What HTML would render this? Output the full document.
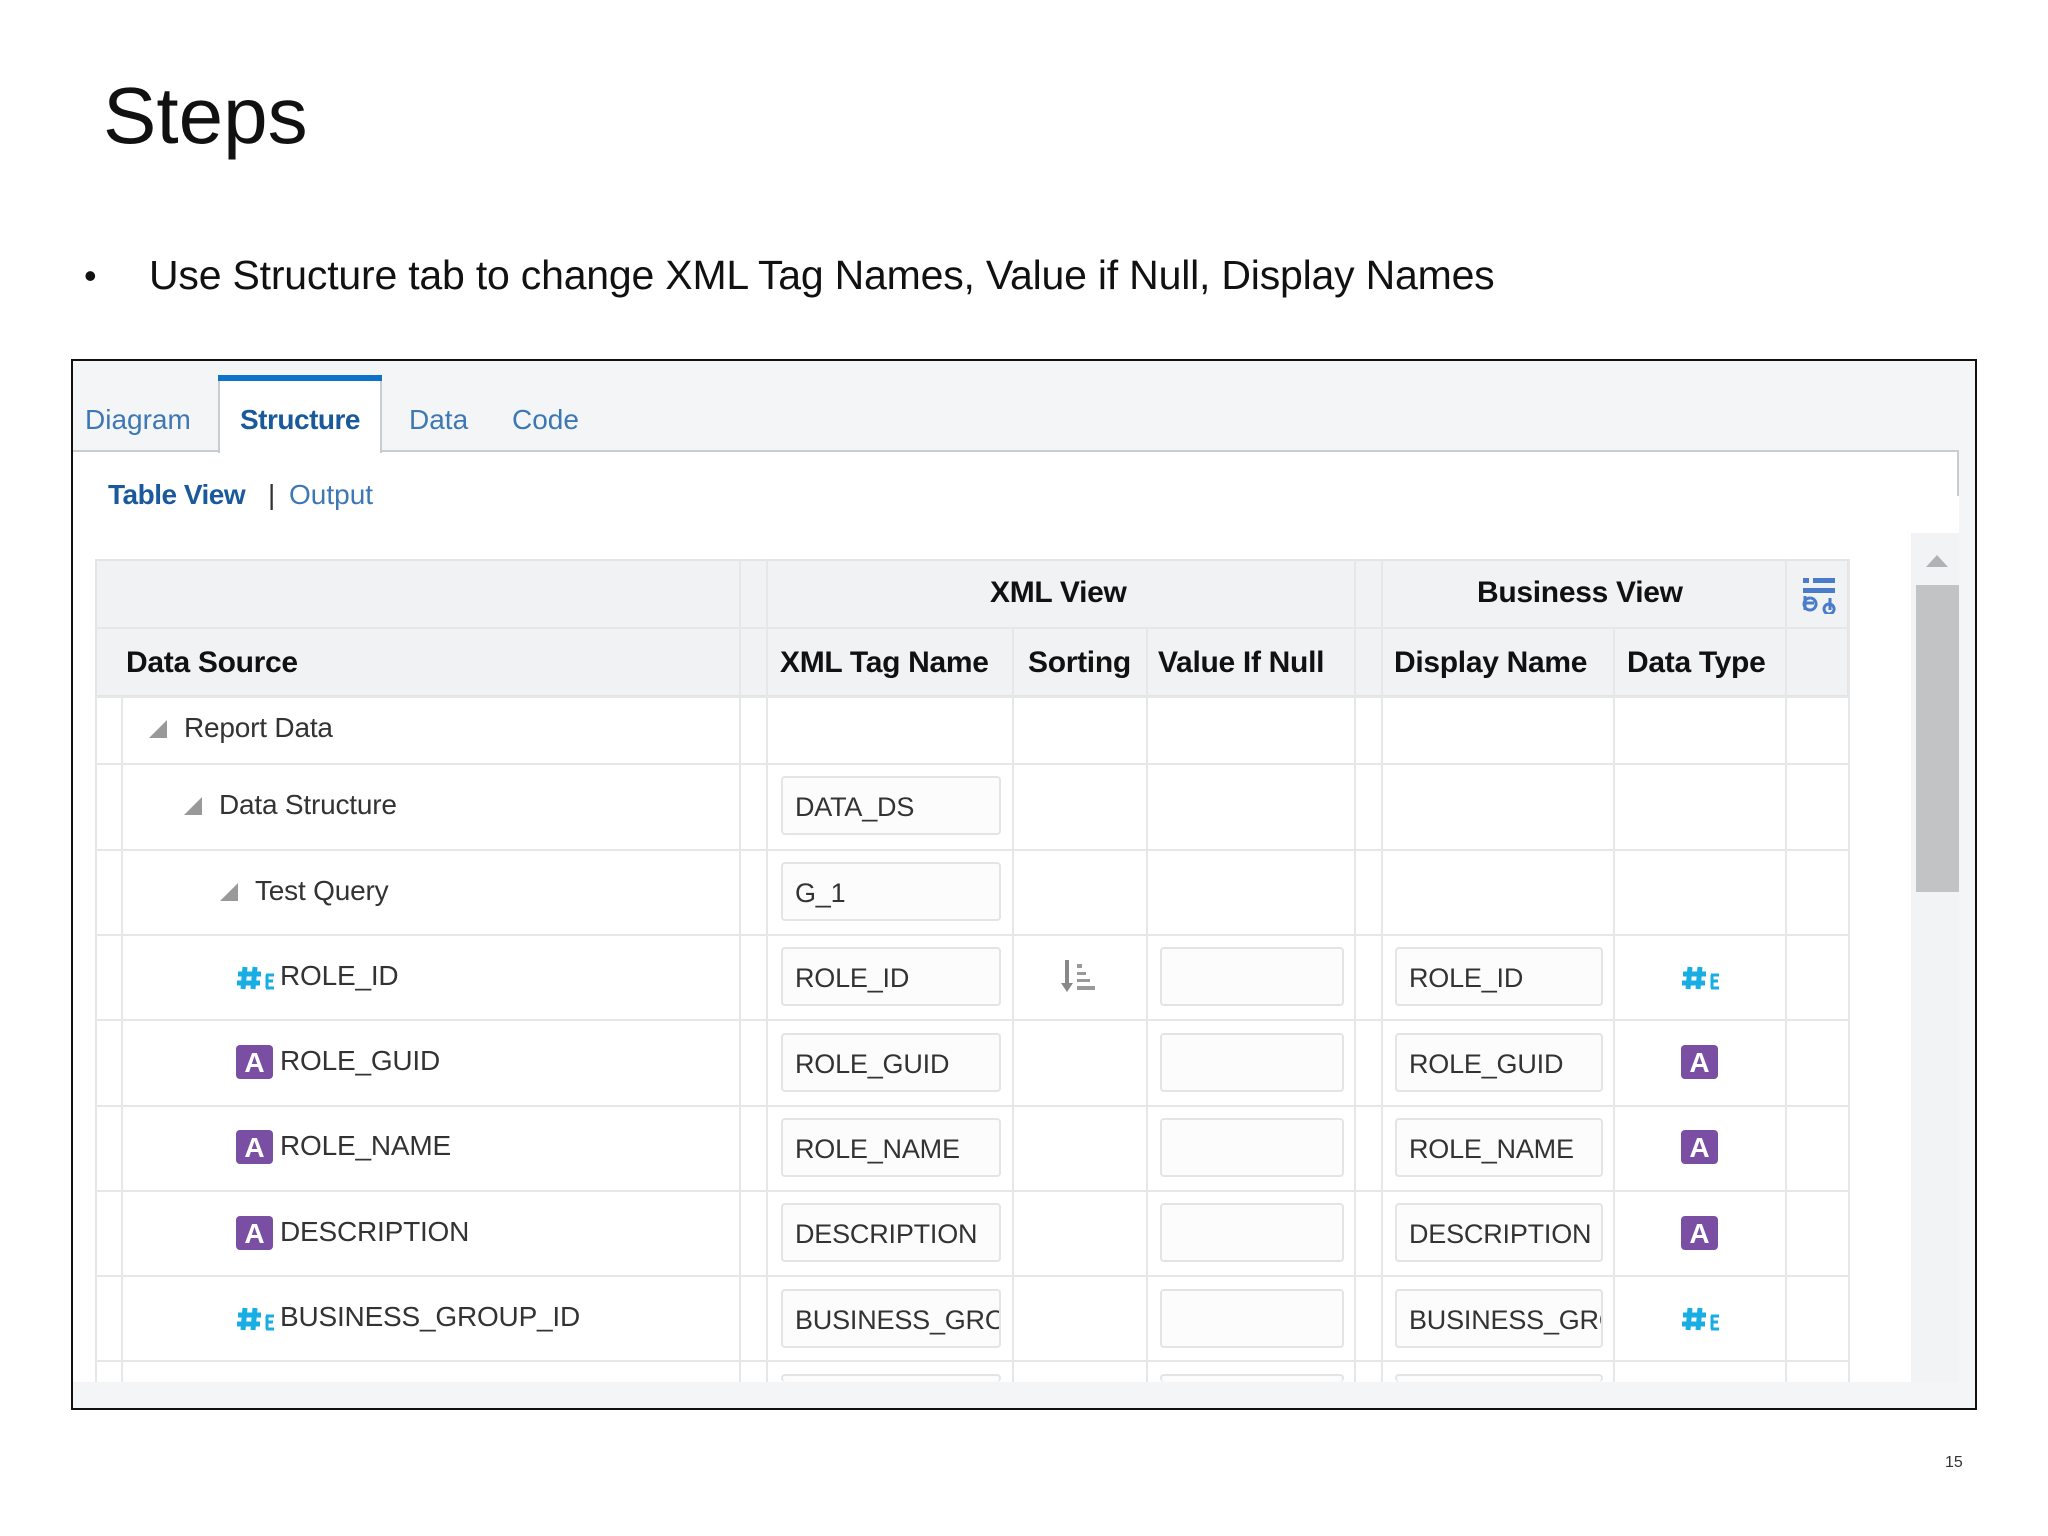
<!DOCTYPE html>
<html><head><meta charset="utf-8"><style>
*{margin:0;padding:0;box-sizing:border-box}
body{width:2048px;height:1536px;background:#fff;position:relative;overflow:hidden;font-family:"Liberation Sans",Arial,sans-serif}
.a{position:absolute}
.t{position:absolute;white-space:nowrap;line-height:1}
.hl{position:absolute;height:2px;background:#e6e7e9}
.vl{position:absolute;width:2px;background:#e6e7e9}
.inp{position:absolute;height:59px;border:2px solid #e2e4e6;border-radius:4px;background:#fcfcfd;overflow:hidden;font-size:27px;color:#333;padding:14px 0 0 12px;white-space:nowrap;letter-spacing:-0.2px}
.hd{font-weight:bold;font-size:30px;color:#111;letter-spacing:-0.3px}
.tx{font-size:28px;color:#333;letter-spacing:-0.2px}
.num{position:absolute}
.ab{position:absolute;width:37px;height:34px;background:#7a4ea3;border-radius:4px;color:#fff;font-weight:bold;font-size:28px;text-align:center;line-height:35px}
.tri{position:absolute;width:0;height:0;border-left:18px solid transparent;border-bottom:18px solid #999}
</style></head><body>
<div class="t" style="left:103px;top:76px;font-size:80px;color:#111">Steps</div>
<div class="t" style="left:84px;top:258px;font-size:36px;color:#111">•</div>
<div class="t" style="left:149px;top:255px;font-size:41px;color:#111;letter-spacing:-0.2px">Use Structure tab to change XML Tag Names, Value if Null, Display Names</div>

<div class="a" style="left:71px;top:359px;width:1906px;height:1051px;border:2px solid #111;background:#f4f5f6"></div>
<div class="a" style="left:73px;top:451px;width:1886px;height:931px;background:#fff"></div>
<div class="a" style="left:73px;top:450px;width:1886px;height:2px;background:#c9cdd2"></div>
<div class="a" style="left:1957px;top:450px;width:2px;height:46px;background:#c9cdd2"></div>
<div class="a" style="left:218px;top:375px;width:164px;height:78px;background:#fff;border-left:2px solid #c9cdd2;border-right:2px solid #c9cdd2"></div>
<div class="a" style="left:218px;top:375px;width:164px;height:6px;background:#0f72c9"></div>
<div class="t" style="left:85px;top:406px;font-size:28px;color:#3d78b5">Diagram</div>
<div class="t" style="left:240px;top:406px;font-size:28px;color:#1a5a9c;font-weight:bold;letter-spacing:-0.5px">Structure</div>
<div class="t" style="left:409px;top:406px;font-size:28px;color:#3d78b5">Data</div>
<div class="t" style="left:512px;top:406px;font-size:28px;color:#3d78b5">Code</div>
<div class="t" style="left:108px;top:481px;font-size:28px;color:#1a5a9c;font-weight:bold;letter-spacing:-0.5px">Table View</div>
<div class="t" style="left:268px;top:481px;font-size:28px;color:#333">|</div>
<div class="t" style="left:289px;top:481px;font-size:28px;color:#3d78b5">Output</div>

<div class="a" style="left:1911px;top:533px;width:48px;height:849px;background:#f2f3f4"></div>
<div class="a" style="left:1926px;top:555px;width:0;height:0;border-left:11px solid transparent;border-right:11px solid transparent;border-bottom:12px solid #b0b2b5"></div>
<div class="a" style="left:1916px;top:585px;width:43px;height:307px;background:#c2c3c5"></div>

<div class="a" style="left:95px;top:559px;width:1754px;height:138px;background:#f1f2f4;border:2px solid #e2e4e7"></div>
<div class="hl" style="left:95px;top:627px;width:1754px"></div>
<div class="hl" style="left:95px;top:696px;width:1754px"></div>
<div class="vl" style="left:739px;top:559px;height:823px"></div>
<div class="vl" style="left:766px;top:559px;height:823px"></div>
<div class="vl" style="left:1354px;top:559px;height:823px"></div>
<div class="vl" style="left:1381px;top:559px;height:823px"></div>
<div class="vl" style="left:1785px;top:559px;height:823px"></div>
<div class="vl" style="left:1848px;top:559px;height:823px"></div>
<div class="vl" style="left:1012px;top:627px;height:755px"></div>
<div class="vl" style="left:1146px;top:627px;height:755px"></div>
<div class="vl" style="left:1613px;top:627px;height:755px"></div>
<div class="vl" style="left:95px;top:697px;height:685px"></div>
<div class="vl" style="left:121px;top:697px;height:685px"></div>

<div class="t hd" style="left:990px;top:578px">XML View</div>
<div class="t hd" style="left:1477px;top:578px">Business View</div>
<svg class="a" style="left:1801px;top:576px" width="36" height="38" viewBox="0 0 36 38">
<rect x="2" y="2" width="6" height="5" fill="#4a7cc9"/><rect x="12" y="2" width="22" height="5" fill="#4a7cc9"/>
<rect x="2" y="12" width="32" height="5" fill="#4a7cc9"/>
<path d="M4 20 V34 M4 27 H13 M9 22 A6 6 0 1 0 9.1 22 M29 22 V34 M28 28 A5 5 0 1 0 28.1 28" stroke="#4a7cc9" stroke-width="3" fill="none"/>
</svg>
<div class="t hd" style="left:126px;top:648px">Data Source</div>
<div class="t hd" style="left:780px;top:648px">XML Tag Name</div>
<div class="t hd" style="left:1028px;top:648px">Sorting</div>
<div class="t hd" style="left:1158px;top:648px">Value If Null</div>
<div class="t hd" style="left:1394px;top:648px">Display Name</div>
<div class="t hd" style="left:1627px;top:648px">Data Type</div>

<div class="hl" style="left:95px;top:763px;width:1754px"></div>
<div class="hl" style="left:95px;top:849px;width:1754px"></div>
<div class="hl" style="left:95px;top:934px;width:1754px"></div>
<div class="hl" style="left:95px;top:1019px;width:1754px"></div>
<div class="hl" style="left:95px;top:1105px;width:1754px"></div>
<div class="hl" style="left:95px;top:1190px;width:1754px"></div>
<div class="hl" style="left:95px;top:1275px;width:1754px"></div>
<div class="hl" style="left:95px;top:1360px;width:1754px"></div>

<div class="tri" style="left:149px;top:720px"></div>
<div class="t tx" style="left:184px;top:714px">Report Data</div>
<div class="tri" style="left:184px;top:797px"></div>
<div class="t tx" style="left:219px;top:791px">Data Structure</div>
<div class="tri" style="left:220px;top:883px"></div>
<div class="t tx" style="left:255px;top:877px">Test Query</div>

<svg width="0" height="0" style="position:absolute"><defs><g id="h"><path d="M9 3 L7 25 M19 3 L17 25 M2 10 H25 M1 19 H24" stroke="#19aee3" stroke-width="5" fill="none"/><path d="M30 11 H38 M30 17 H37 M30 24 H38 M31 11 V24" stroke="#19aee3" stroke-width="3" fill="none"/></g></defs></svg>
<svg class="num" style="left:236px;top:964px" width="40" height="28"><use href="#h"/></svg>
<div class="t tx" style="left:280px;top:962px">ROLE_ID</div>
<div class="ab" style="left:236px;top:1045px">A</div>
<div class="t tx" style="left:280px;top:1047px">ROLE_GUID</div>
<div class="ab" style="left:236px;top:1130px">A</div>
<div class="t tx" style="left:280px;top:1132px">ROLE_NAME</div>
<div class="ab" style="left:236px;top:1216px">A</div>
<div class="t tx" style="left:280px;top:1218px">DESCRIPTION</div>
<svg class="num" style="left:236px;top:1305px" width="40" height="28"><use href="#h"/></svg>
<div class="t tx" style="left:280px;top:1303px">BUSINESS_GROUP_ID</div>

<div class="inp" style="left:781px;top:776px;width:220px">DATA_DS</div>
<div class="inp" style="left:781px;top:862px;width:220px">G_1</div>
<div class="inp" style="left:781px;top:947px;width:220px">ROLE_ID</div>
<div class="inp" style="left:781px;top:1033px;width:220px">ROLE_GUID</div>
<div class="inp" style="left:781px;top:1118px;width:220px">ROLE_NAME</div>
<div class="inp" style="left:781px;top:1203px;width:220px">DESCRIPTION</div>
<div class="inp" style="left:781px;top:1289px;width:220px">BUSINESS_GROUP_ID</div>
<div class="inp" style="left:781px;top:1374px;width:220px;height:8px;border-bottom:none;padding:0"></div>

<svg class="a" style="left:1060px;top:958px" width="40" height="40" viewBox="0 0 40 40">
<path d="M7 2 V30" stroke="#888" stroke-width="4"/><path d="M1 25 L7 34 L13 25 Z" fill="#888"/>
<rect x="17" y="6" width="5" height="4" fill="#999"/><rect x="17" y="14" width="9" height="3" fill="#999"/>
<rect x="17" y="21" width="13" height="3" fill="#999"/><rect x="17" y="28" width="18" height="4" fill="#999"/>
</svg>

<div class="inp" style="left:1160px;top:947px;width:184px"></div>
<div class="inp" style="left:1160px;top:1033px;width:184px"></div>
<div class="inp" style="left:1160px;top:1118px;width:184px"></div>
<div class="inp" style="left:1160px;top:1203px;width:184px"></div>
<div class="inp" style="left:1160px;top:1289px;width:184px"></div>
<div class="inp" style="left:1160px;top:1374px;width:184px;height:8px;border-bottom:none;padding:0"></div>

<div class="inp" style="left:1395px;top:947px;width:208px">ROLE_ID</div>
<div class="inp" style="left:1395px;top:1033px;width:208px">ROLE_GUID</div>
<div class="inp" style="left:1395px;top:1118px;width:208px">ROLE_NAME</div>
<div class="inp" style="left:1395px;top:1203px;width:208px">DESCRIPTION</div>
<div class="inp" style="left:1395px;top:1289px;width:208px">BUSINESS_GROUP_ID</div>
<div class="inp" style="left:1395px;top:1374px;width:208px;height:8px;border-bottom:none;padding:0"></div>

<svg class="num" style="left:1681px;top:964px" width="40" height="28"><use href="#h"/></svg>
<div class="ab" style="left:1681px;top:1045px">A</div>
<div class="ab" style="left:1681px;top:1130px">A</div>
<div class="ab" style="left:1681px;top:1216px">A</div>
<svg class="num" style="left:1681px;top:1305px" width="40" height="28"><use href="#h"/></svg>

<div class="t" style="left:1945px;top:1455px;font-size:16px;color:#333">15</div>
</body></html>
